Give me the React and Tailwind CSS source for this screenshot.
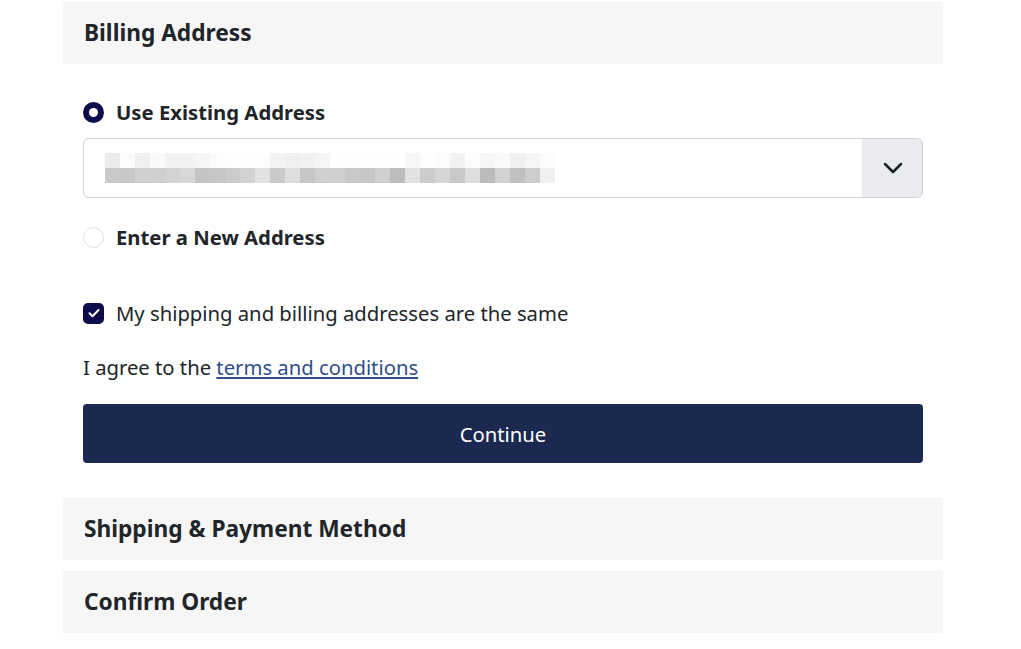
import React from "react";

const topRow = [
  "bg-[#ececec]", "bg-[#fbfbfb]", "bg-[#efefef]", "bg-[#fafafa]", "bg-[#f2f2f2]",
  "bg-[#f2f2f2]", "bg-[#f5f5f5]", "bg-[#fbfbfb]", "bg-[#fdfdfd]", "bg-[#fdfdfd]",
  "bg-[#fdfdfd]", "bg-[#f3f3f3]", "bg-[#efefef]", "bg-[#f1f1f1]", "bg-[#f5f5f5]",
  "bg-[#fefefe]", "bg-[#fefefe]", "bg-[#fefefe]", "bg-[#fefefe]", "bg-[#fefefe]",
  "bg-[#f7f7f7]", "bg-[#fdfdfd]", "bg-[#fbfbfb]", "bg-[#f2f2f2]", "bg-[#fcfcfc]",
  "bg-[#f6f6f6]", "bg-[#fafafa]", "bg-[#f0f0f0]", "bg-[#f5f5f5]", "bg-[#fcfcfc]",
];

const bottomRow = [
  "bg-[#cacaca]", "bg-[#c8c8c8]", "bg-[#d0d0d0]", "bg-[#cfcfcf]", "bg-[#d3d3d3]",
  "bg-[#d8d8d8]", "bg-[#c4c4c4]", "bg-[#c6c6c6]", "bg-[#cbcbcb]", "bg-[#d2d2d2]",
  "bg-[#e2e2e2]", "bg-[#cacaca]", "bg-[#dedede]", "bg-[#c6c6c6]", "bg-[#d0d0d0]",
  "bg-[#cfcfcf]", "bg-[#c9c9c9]", "bg-[#c6c6c6]", "bg-[#d0d0d0]", "bg-[#bdbdbd]",
  "bg-[#e2e2e2]", "bg-[#cccccc]", "bg-[#d6d6d6]", "bg-[#c9c9c9]", "bg-[#dedede]",
  "bg-[#bcbcbc]", "bg-[#d2d2d2]", "bg-[#c0c0c0]", "bg-[#cdcdcd]", "bg-[#f0f0f0]",
];

const SectionHeader = ({ title }) => (
  <div className="h-[62px] bg-[#f6f6f6] px-[21px] flex items-center">
    <h2 className="text-[22.7px] font-bold text-[#212529]">{title}</h2>
  </div>
);

const BlurredAddress = () => (
  <div className="flex flex-col">
    <div className="flex">
      {topRow.map((c, i) => (
        <span key={i} className={`w-[15px] h-[15px] ${c}`}></span>
      ))}
    </div>
    <div className="flex">
      {bottomRow.map((c, i) => (
        <span key={i} className={`w-[15px] h-[15px] ${c}`}></span>
      ))}
    </div>
  </div>
);

export default function App() {
  return (
    <div className="min-h-screen bg-white font-['Segoe_UI','Noto_Sans',sans-serif] text-[#212529]">
      <div className="ml-[63px] w-[880px] pt-[2px]">
        <SectionHeader title="Billing Address" />

        <div className="px-5">
          <label className="mt-[36px] flex items-center gap-3 h-6">
            <span className="w-[21px] h-[21px] rounded-full bg-[#0f0c4c] flex items-center justify-center">
              <span className="w-[9px] h-[9px] rounded-full bg-white"></span>
            </span>
            <span className="text-[20.3px] font-bold">Use Existing Address</span>
          </label>

          <div className="mt-[14px] h-[60px] border border-[#ced4da] rounded-md flex overflow-hidden">
            <div className="flex-1 flex items-center pl-[21px]">
              <BlurredAddress />
            </div>
            <div className="w-[60px] bg-[#e9ebef] flex items-center justify-center border-l border-[#e4e6ea]">
              <svg width="20" height="12" viewBox="0 0 20 12" fill="none">
                <path d="M2 2l8 8 8-8" stroke="#1a1d21" strokeWidth="2.5" strokeLinecap="round" strokeLinejoin="round" />
              </svg>
            </div>
          </div>

          <label className="mt-[27px] flex items-center gap-3 h-6">
            <span className="w-[21px] h-[21px] rounded-full border border-[#e0e0e0] bg-white"></span>
            <span className="text-[20.3px] font-bold">Enter a New Address</span>
          </label>

          <label className="mt-[52px] flex items-center gap-3 h-6">
            <span className="w-[21px] h-[21px] rounded-[5px] bg-[#0f0c4c] flex items-center justify-center">
              <svg width="12" height="10" viewBox="0 0 12 10" fill="none">
                <path d="M1.5 5.2l3 3L10.5 2" stroke="white" strokeWidth="2" strokeLinecap="round" strokeLinejoin="round" />
              </svg>
            </span>
            <span className="text-[20.25px]">My shipping and billing addresses are the same</span>
          </label>

          <p className="mt-[30px] text-[20.25px] leading-6">
            I agree to the{" "}
            <a href="#" className="text-[#2f4f8a] underline underline-offset-2">
              terms and conditions
            </a>
          </p>

          <button className="mt-[25px] w-full h-[59px] rounded-[4px] bg-[#1b2850] text-white text-[20.25px] pt-[2px]">
            Continue
          </button>
        </div>

        <div className="mt-[35px]">
          <SectionHeader title="Shipping & Payment Method" />
        </div>
        <div className="mt-[11px]">
          <SectionHeader title="Confirm Order" />
        </div>
      </div>
    </div>
  );
}
